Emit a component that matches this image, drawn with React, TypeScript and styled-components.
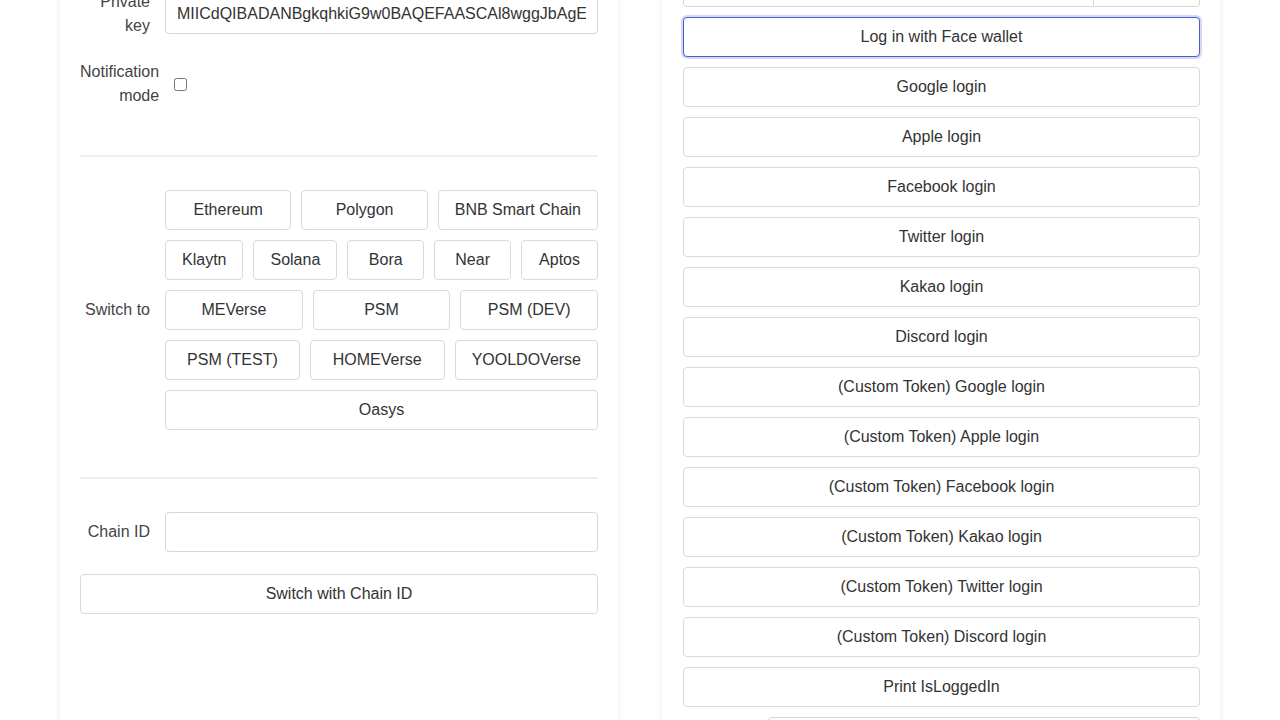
import React from "react";
import styled, { createGlobalStyle, css } from "styled-components";

const Global = createGlobalStyle`
  html, body { margin: 0; padding: 0; background: #fff; }
  body { font-family: "Liberation Sans", Arial, sans-serif; font-size: 16px; color: #333; }
  * { box-sizing: border-box; }
`;

const Columns = styled.div`
  display: flex;
  justify-content: center;
  gap: 44px;
  margin-top: -60px;
`;

const Panel = styled.section<{ $top: number; $left: number }>`
  width: 558px;
  min-height: 900px;
  background: #fff;
  box-shadow: 0 0 7px rgba(0, 0, 0, 0.07);
  padding: ${(p) => p.$top}px 20px 40px ${(p) => p.$left}px;
  display: flex;
  flex-direction: column;
`;

const Stack = styled.div<{ $gap: number }>`
  display: flex;
  flex-direction: column;
  gap: ${(p) => p.$gap}px;
`;

const Row = styled.div`
  display: flex;
  align-items: center;
`;

const Label = styled.label`
  flex: 0 0 70px;
  margin-right: 15px;
  text-align: right;
  line-height: 24px;
  color: #444;
`;

const Field = styled.input`
  flex: 1;
  min-width: 0;
  height: 40px;
  padding: 0 11px;
  border: 1px solid #d6d6d6;
  border-radius: 4px;
  font: inherit;
  color: #333;
  background: #fff;
  outline: none;
`;

const Check = styled.input`
  width: 13px;
  height: 13px;
  margin: 0;
`;

const Divider = styled.hr`
  border: 0;
  height: 2px;
  background: #efefef;
  margin: 47px 0 33px;
`;

const Button = styled.button<{ $focused?: boolean; $grow?: boolean }>`
  height: 40px;
  padding: 0 16px;
  border: 1px solid #d9d9d9;
  border-radius: 4px;
  background: #fff;
  font: inherit;
  color: #333;
  white-space: nowrap;
  cursor: pointer;
  ${(p) =>
    p.$grow &&
    css`
      flex: 1 1 0;
    `}
  ${(p) =>
    p.$focused &&
    css`
      border-color: #4a5ccf;
      box-shadow: 0 0 0 2px #d3d9f5;
    `}
`;

const ChainGrid = styled.div`
  flex: 1;
  display: flex;
  flex-direction: column;
  gap: 10px;
`;

const ChainRow = styled.div`
  display: flex;
  gap: 10px;
`;

const InputGroup = styled.div`
  display: flex;
  height: 40px;
`;

const GroupField = styled(Field)`
  border-radius: 4px 0 0 4px;
`;

const GroupButton = styled.button`
  flex: 0 0 106px;
  height: 40px;
  border: 1px solid #d6d6d6;
  border-left: 0;
  border-radius: 0 4px 4px 0;
  background: #fff;
  font: inherit;
  color: #333;
`;

const chainRows = [
  ["Ethereum", "Polygon", "BNB Smart Chain"],
  ["Klaytn", "Solana", "Bora", "Near", "Aptos"],
  ["MEVerse", "PSM", "PSM (DEV)"],
  ["PSM (TEST)", "HOMEVerse", "YOOLDOVerse"],
  ["Oasys"],
];

const loginButtons = [
  "Log in with Face wallet",
  "Google login",
  "Apple login",
  "Facebook login",
  "Twitter login",
  "Kakao login",
  "Discord login",
  "(Custom Token) Google login",
  "(Custom Token) Apple login",
  "(Custom Token) Facebook login",
  "(Custom Token) Kakao login",
  "(Custom Token) Twitter login",
  "(Custom Token) Discord login",
  "Print IsLoggedIn",
];

export default function App() {
  return (
    <>
      <Global />
      <Columns>
        <Panel $top={50} $left={20}>
          <Stack $gap={22}>
            <Row>
              <Label>Private key</Label>
              <Field defaultValue="MIICdQIBADANBgkqhkiG9w0BAQEFAASCAl8wggJbAgEAAoGBAL" />
            </Row>
            <Row>
              <Label>Notification mode</Label>
              <Check type="checkbox" />
            </Row>
          </Stack>
          <Divider />
          <Row>
            <Label>Switch to</Label>
            <ChainGrid>
              {chainRows.map((r, i) => (
                <ChainRow key={i}>
                  {r.map((c) => (
                    <Button key={c} $grow>
                      {c}
                    </Button>
                  ))}
                </ChainRow>
              ))}
            </ChainGrid>
          </Row>
          <Divider />
          <Stack $gap={22}>
            <Row>
              <Label>Chain ID</Label>
              <Field />
            </Row>
            <Button>Switch with Chain ID</Button>
          </Stack>
        </Panel>
        <Panel $top={27} $left={21}>
          <Stack $gap={10}>
            <InputGroup>
              <GroupField />
              <GroupButton />
            </InputGroup>
            {loginButtons.map((b, i) => (
              <Button key={b} $focused={i === 0}>
                {b}
              </Button>
            ))}
            <Row>
              <Label />
              <Field />
            </Row>
          </Stack>
        </Panel>
      </Columns>
    </>
  );
}
